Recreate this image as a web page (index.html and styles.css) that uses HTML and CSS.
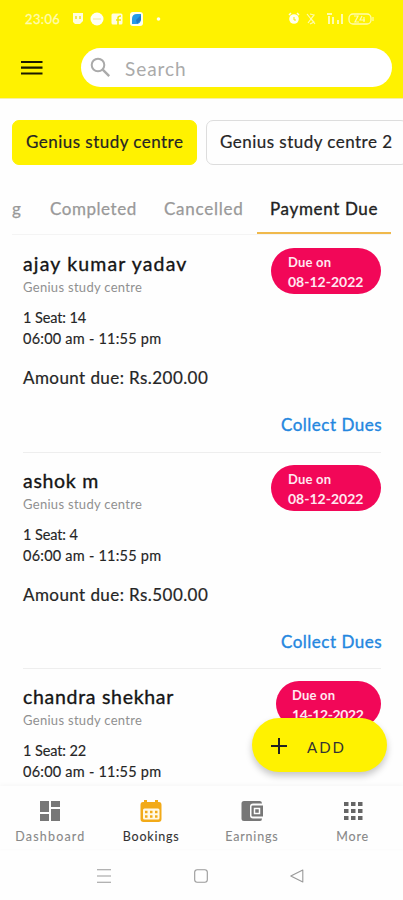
FILE: index.html
```
<!DOCTYPE html>
<html lang="en">
<head>
<meta charset="utf-8">
<meta name="viewport" content="width=device-width, initial-scale=1">
<title>Bookings</title>
<link rel="stylesheet" href="styles.css">
</head>
<body>
<div class="app">
  <header class="header">
    <div class="status">
      <span class="clock">23:06</span>
      <svg class="status-left" width="90" height="14" viewBox="0 0 90 14">
        <path fill="#fffde0" d="M1 1h10v8l-3 3H3l-2-2z"/><path d="M4 4v3M8 4v3" stroke="#ecdf30" stroke-width="1.5"/>
        <circle cx="25" cy="7" r="6.5" fill="#fffff4"/><path d="M21 7h8" stroke="#eee9a0"/>
        <rect x="39.500" y="1.500" width="11" height="11" rx="1.500" fill="#fffde0"/><path d="M46 13V6q0-2 3-2M44 8h5" fill="none" stroke="#f4e900" stroke-width="1.600"/>
        <rect x="58" y="0" width="13" height="14" rx="3" fill="#fffff0"/><path d="M60 7q0-5 5-5h4v5q0 5-5 5h-4z" fill="#249be8"/><path d="M64 8l5-5v5l-4 4z" fill="#2079c9"/>
        <circle cx="86.500" cy="7" r="1.800" fill="#fffff0"/>
      </svg>
      <svg class="status-right" width="88" height="14" viewBox="0 0 88 14">
        <circle cx="6" cy="7" r="4.800" fill="#fffff0"/><path d="M1 3l2-2M11 3L9 1" stroke="#fffde0" stroke-width="1.500"/><path d="M6 5v3h2" fill="none" stroke="#f4e900"/>
        <path d="M19 2l8 10M20 11l6-8M22 2l4 1-3 4 3 3-4 2" fill="none" stroke="#fffbb0" stroke-width="1.200"/>
        <path d="M39 2h5M41 4v8M45 5v7M50 8v4M54 2v10" fill="none" stroke="#fffcae" stroke-width="2"/>
        <rect x="61" y="2" width="22" height="10" rx="4" fill="none" stroke="#fffcae" stroke-width="1.300"/><path d="M66 4h4l-3 6h4M74 4l-2 4h5M76 5v5M85 5v4" fill="none" stroke="#fffcae" stroke-width="1.200"/>
      </svg>
    </div>
    <div class="toolbar">
      <svg class="menu" width="22" height="16" viewBox="0 0 22 16"><path d="M0 2h21.500M0 7.700h21.500M0 13.500h21.500" stroke="#1c1a00" stroke-width="2.200"/></svg>
      <div class="search">
        <svg width="22" height="22" viewBox="0 0 22 22" fill="none" stroke="#aaa" stroke-width="2"><circle cx="8" cy="8" r="6.300"/><path d="M12.700 12.700l6.500 6.500" stroke-width="2.400"/></svg>
        <span class="placeholder">Search</span>
      </div>
    </div>
  </header>
  <div class="chips">
    <span class="chip chip-on"><span class="chip-label">Genius study centre</span></span>
    <span class="chip"><span class="chip-label">Genius study centre 2</span></span>
  </div>
  <nav class="tabs">
    <span class="tab tab-cut">g</span>
    <span class="tab tab-completed">Completed</span>
    <span class="tab tab-cancelled">Cancelled</span>
    <span class="tab tab-on">Payment Due</span>
  </nav>
  <main class="list">
    <article class="card">
      <div class="info">
        <h2 class="name n1">ajay kumar yadav</h2>
        <p class="place">Genius study centre</p>
        <p class="seat">1 Seat: 14</p>
        <p class="time">06:00 am - 11:55 pm</p>
        <p class="amount">Amount due: Rs.200.00</p>
      </div>
      <div class="side">
        <div class="badge"><span class="due">Due on</span><span class="date">08-12-2022</span></div>
        <a class="collect">Collect Dues</a>
      </div>
    </article>
    <article class="card">
      <div class="info">
        <h2 class="name n2">ashok m</h2>
        <p class="place">Genius study centre</p>
        <p class="seat">1 Seat: 4</p>
        <p class="time">06:00 am - 11:55 pm</p>
        <p class="amount">Amount due: Rs.500.00</p>
      </div>
      <div class="side">
        <div class="badge"><span class="due">Due on</span><span class="date">08-12-2022</span></div>
        <a class="collect">Collect Dues</a>
      </div>
    </article>
    <article class="card card-last">
      <div class="info">
        <h2 class="name n3">chandra shekhar</h2>
        <p class="place">Genius study centre</p>
        <p class="seat">1 Seat: 22</p>
        <p class="time">06:00 am - 11:55 pm</p>
      </div>
      <div class="side">
        <div class="badge badge-narrow"><span class="due">Due on</span><span class="date">14-12-2022</span></div>
      </div>
    </article>
  </main>
  <button class="fab">
    <svg width="16" height="16" viewBox="0 0 16 16"><path d="M8 0v16M0 8h16" stroke="#222" stroke-width="2"/></svg>
    <span class="add">ADD</span>
  </button>
  <footer class="bottom">
    <div class="item">
      <svg width="24" height="24" viewBox="0 0 24 24" fill="#777"><path d="M2 2h9v11H2zM13 2h9v6h-9zM2 15h9v7H2zM13 10h9v12h-9z"/></svg>
      <span class="label l1">Dashboard</span>
    </div>
    <div class="item item-on">
      <svg width="24" height="24" viewBox="0 0 24 24"><path fill="#f2aa18" d="M4 3h1V1h3v2h8V1h3v2h1q2.500 0 2.500 3v14q0 3-3 3h-15q-3 0-3-3V6q0-3 2.500-3z"/><rect x="4" y="9.500" width="16.500" height="11" rx="1.500" fill="#fff8e5"/><path d="M6 13h2.500M11 13h2.500M16 13h2.500M6 17.500h2.500M11 17.500h2.500M16 17.500h2.500" stroke="#f2aa18" stroke-width="2.500"/></svg>
      <span class="label l2">Bookings</span>
    </div>
    <div class="item">
      <svg width="24" height="24" viewBox="0 0 24 24"><path fill="#777" d="M4 2h16q2 0 2 2.500h-9q-3 0-3 3v9q0 3 3 3h9q0 2.500-2 2.500H4q-2.500 0-2.500-2.500v-15Q1.500 2 4 2zM12.500 6.500H23v11H12.500q-1 0-1-1v-9q0-1 1-1z"/><rect x="14.500" y="9.500" width="5" height="5" fill="#777" stroke="#fff" stroke-width="1.500"/></svg>
      <span class="label l3">Earnings</span>
    </div>
    <div class="item">
      <svg width="24" height="24" viewBox="0 0 24 24" fill="#666"><path d="M3 3h4.500v4H3zM10 3h4.500v4H10zM17 3h4.500v4H17zM3 10h4.500v4H3zM10 10h4.500v4H10zM17 10h4.500v4H17zM3 17h4.500v4H3zM10 17h4.500v4H10zM17 17h4.500v4H17z"/></svg>
      <span class="label l4">More</span>
    </div>
  </footer>
  <div class="system">
    <svg width="14" height="14" viewBox="0 0 14 14"><path d="M0 .8h14M0 7h14M0 13.200h14" stroke="#999" stroke-width="1.100"/></svg>
    <svg width="14" height="14" viewBox="0 0 14 14"><rect x=".7" y=".7" width="12.600" height="12.600" rx="2.500" fill="none" stroke="#999" stroke-width="1.100"/></svg>
    <svg width="14" height="14" viewBox="0 0 14 14"><path d="M12.800 1v12L.8 7z" fill="none" stroke="#999" stroke-width="1.100" stroke-linejoin="round"/></svg>
  </div>
</div>
</body>
</html>
```
FILE: styles.css
```
* { box-sizing: border-box; }
body { margin: 0; background: #fefefe; font-family: Lato, "Liberation Sans", sans-serif; color: #252525; }
svg { display: block; flex: none; }
h2, p { margin: 0; font-weight: 400; }
.app { position: relative; width: 403px; height: 900px; overflow: hidden; display: flex; flex-direction: column; }
.header { height: 99px; flex: none; background: #fff200; border-bottom: 1px solid #f5efaa; }
.status { height: 37px; padding: 1px 27px 0 25px; display: flex; align-items: center; }
.clock { width: 47px; font-size: 13px; letter-spacing: .35px; color: #fffcae; -webkit-text-stroke: .3px; }
.status-right { margin-left: auto; }
.toolbar { display: flex; align-items: center; margin-top: 11px; padding: 0 11px 0 21px; }
.menu { margin-right: 38px; }
.search { flex: 1; height: 39px; border-radius: 20px; background: #fff; display: flex; align-items: center; padding-left: 9px; }
.placeholder { margin-left: 13px; padding-top: 2px; font-size: 19px; letter-spacing: .95px; color: #aaa; }
.chips { display: flex; gap: 9px; padding: 21px 0 0 12px; flex: none; }
.chip { width: 202px; height: 45px; flex: none; border: 1px solid #ddd; border-radius: 7px; padding: 0 13px; font-size: 17px; line-height: 42px; white-space: nowrap; -webkit-text-stroke: .2px; }
.chip-on { width: 185px; background: #fff200; border-color: #fff200; }
.chip-label { letter-spacing: .47px; }
.tabs { display: flex; flex: none; height: 70px; margin: 0 12px; font-size: 17px; line-height: 88px; color: #999; white-space: nowrap; overflow: hidden; border-bottom: 1px solid #f4f4f4; -webkit-text-stroke: .25px; }
.tab-cut { width: 38px; }
.tab-completed { width: 114px; letter-spacing: .55px; }
.tab-cancelled { width: 93px; letter-spacing: .75px; }
.tab-on { width: 134px; padding-left: 13px; color: #222; border-bottom: 2px solid #f0b94c; letter-spacing: .65px; -webkit-text-stroke: .35px; }
.list { flex: 1; min-height: 0; overflow: hidden; padding: 1px 22px 0 23px; }
.card { height: 216.500px; padding-top: 12px; border-bottom: 1px solid #eee; display: flex; justify-content: space-between; white-space: nowrap; }
.card-last { border: 0; }
.name { font-size: 19.500px; line-height: 31px; color: #151515; -webkit-text-stroke: .35px; }
.n1 { letter-spacing: 1.15px; }
.n2 { letter-spacing: .7px; }
.n3 { letter-spacing: .7px; }
.place { font-size: 13px; line-height: 16px; letter-spacing: .3px; color: #909090; }
.seat { margin-top: 12px; font-size: 14.500px; line-height: 21px; letter-spacing: -.1px; -webkit-text-stroke: .15px; }
.time { font-size: 14.500px; line-height: 21px; letter-spacing: .23px; -webkit-text-stroke: .15px; }
.amount { margin-top: 18px; font-size: 17px; line-height: 22px; letter-spacing: .43px; -webkit-text-stroke: .2px; }
.side { display: flex; flex-direction: column; align-items: flex-end; }
.badge { width: 110px; height: 46px; border-radius: 23px; background: #f20758; color: #ffe8f0; padding: 4px 0 0 17px; font-weight: 700; display: flex; flex-direction: column; }
.badge-narrow { width: 105px; padding-left: 16px; }
.due { font-size: 13px; line-height: 20px; letter-spacing: .2px; }
.date { font-size: 14px; line-height: 19px; letter-spacing: 0; }
.badge-narrow .date { letter-spacing: -.4px; }
.collect { margin-top: 120px; margin-right: -1px; font-size: 17px; line-height: 22px; letter-spacing: .5px; color: #2487df; -webkit-text-stroke: .35px; }
.fab { position: absolute; left: 252px; top: 718px; width: 135px; height: 54px; border: 0; border-radius: 27px; background: #fff200; box-shadow: 0 4px 7px rgba(0,0,0,.22); padding: 1px 0 0 19px; display: flex; align-items: center; gap: 20px; font-family: inherit; color: #333; }
.add { font-size: 15px; letter-spacing: 2px; padding-top: 2px; }
.bottom { position: relative; flex: none; height: 63px; display: flex; background: #fefefe; box-shadow: 0 -1px 5px rgba(0,0,0,.04); }
.item { flex: 1; display: flex; flex-direction: column; align-items: center; padding-top: 13px; color: #888; }
.item-on { color: #333; }
.label { margin-top: 5px; font-size: 12.500px; line-height: 18px; letter-spacing: .8px; -webkit-text-stroke: .1px; }
.l1 { letter-spacing: 1.2px; }
.system { flex: none; height: 51px; padding: 20px 99px 0 97px; display: flex; justify-content: space-between; }
```
